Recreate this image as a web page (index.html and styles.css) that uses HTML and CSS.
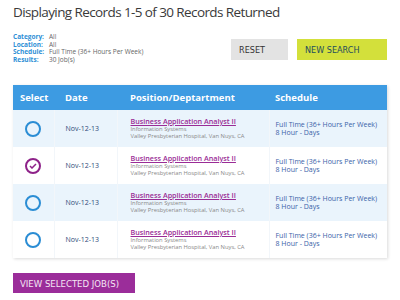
FILE: index.html
```html
<!DOCTYPE html>
<html lang="en">
<head>
  <meta charset="UTF-8">
  <title>Job Search Results</title>
  <link rel="stylesheet" href="styles.css">
</head>
<body>

  <!-- Results heading -->
  <h1 class="title">Displaying Records 1-5 of 30 Records Returned</h1>

  <!-- Search summary + actions -->
  <div class="summary">
    <dl class="filters">
      <dt>Category:</dt><dd>All</dd>
      <dt>Location:</dt><dd>All</dd>
      <dt>Schedule:</dt><dd>Full Time (36+ Hours Per Week)</dd>
      <dt>Results:</dt><dd>30 Job(s)</dd>
    </dl>
    <div class="actions">
      <button class="btn btn-reset">RESET</button>
      <button class="btn btn-new">NEW SEARCH</button>
    </div>
  </div>

  <!-- Results table -->
  <table class="results">
    <thead>
      <tr>
        <th class="col-select">Select</th>
        <th class="col-date">Date</th>
        <th class="col-pos">Position/Deptartment</th>
        <th class="col-sched">Schedule</th>
      </tr>
    </thead>
    <tbody>
      <tr>
        <td class="select"><span class="radio"></span></td>
        <td class="date">Nov-12-13</td>
        <td class="pos">
          <a class="job" href="#">Business Application Analyst II</a>
          <div class="meta">Information Systems</div>
          <div class="meta">Valley Presbyterian Hospital, Van Nuys, CA</div>
        </td>
        <td class="sched">Full Time (36+ Hours Per Week)<br>8 Hour - Days</td>
      </tr>
      <tr>
        <td class="select">
          <span class="radio checked">
            <svg width="8" height="6" viewBox="0 0 8 6"><path d="M1 3 L3 5 L7 1" fill="none" stroke="#8e2289" stroke-width="1.5"/></svg>
          </span>
        </td>
        <td class="date">Nov-12-13</td>
        <td class="pos">
          <a class="job" href="#">Business Application Analyst II</a>
          <div class="meta">Information Systems</div>
          <div class="meta">Valley Presbyterian Hospital, Van Nuys, CA</div>
        </td>
        <td class="sched">Full Time (36+ Hours Per Week)<br>8 Hour - Days</td>
      </tr>
      <tr>
        <td class="select"><span class="radio"></span></td>
        <td class="date">Nov-12-13</td>
        <td class="pos">
          <a class="job" href="#">Business Application Analyst II</a>
          <div class="meta">Information Systems</div>
          <div class="meta">Valley Presbyterian Hospital, Van Nuys, CA</div>
        </td>
        <td class="sched">Full Time (36+ Hours Per Week)<br>8 Hour - Days</td>
      </tr>
      <tr>
        <td class="select"><span class="radio"></span></td>
        <td class="date">Nov-12-13</td>
        <td class="pos">
          <a class="job" href="#">Business Application Analyst II</a>
          <div class="meta">Information Systems</div>
          <div class="meta">Valley Presbyterian Hospital, Van Nuys, CA</div>
        </td>
        <td class="sched">Full Time (36+ Hours Per Week)<br>8 Hour - Days</td>
      </tr>
    </tbody>
  </table>

  <button class="btn btn-view">VIEW SELECTED JOB(S)</button>

</body>
</html>
```

FILE: styles.css
```css
body {
  margin: 0;
  padding: 2px 13px 0;
  background: #fff;
  color: #333;
  font-family: 'Open Sans', 'Noto Sans', sans-serif;
}

.title {
  margin: 0;
  font-size: 13.5px;
  font-weight: normal;
  letter-spacing: -0.6px;
  line-height: 20px;
  color: #3a3a3a;
}

/* Summary row */
.summary {
  display: flex;
  justify-content: space-between;
  align-items: flex-start;
  margin-top: 11px;
}

.filters {
  display: grid;
  grid-template-columns: 36px auto;
  margin: 0;
  font-size: 6.5px;
  line-height: 7.5px;
}

.filters dt {
  color: #2e8fd6;
  font-weight: bold;
}

.filters dd {
  margin: 0;
  color: #666;
}

.actions {
  display: flex;
  gap: 9px;
  margin-top: 6px;
}

.btn {
  border: none;
  height: 21px;
  padding: 0 8px;
  font-family: 'DejaVu Sans Condensed', 'DejaVu Sans', sans-serif;
  font-stretch: condensed;
  font-size: 9px;
  text-align: left;
  cursor: pointer;
}

.btn-reset {
  width: 57px;
  background: #e3e3e3;
  color: #333;
}

.btn-new {
  width: 90px;
  background: #d3e03b;
  color: #1f4d5e;
}

/* Results table */
.results {
  width: 374px;
  margin-top: 22px;
  border-collapse: collapse;
  table-layout: fixed;
  box-shadow: 1px 1px 3px rgba(0, 0, 0, 0.15);
  font-size: 7px;
}

.results th,
.results td {
  box-sizing: border-box;
}

.results th {
  height: 25px;
  padding: 0;
  background: #3d9be2;
  color: #fff;
  font-size: 9.5px;
  text-align: left;
}

.col-select { width: 41px; }
.col-date { width: 63px; }
.col-pos { width: 152px; }
.col-sched { width: 118px; }

.results th.col-select { padding-left: 7px; }
.results th.col-date { padding-left: 11px; }
.results th.col-pos { padding-left: 13px; }
.results th.col-sched { padding-left: 6px; }

.results td {
  height: 37px;
  padding: 0;
  border-left: 1px solid #f2f6fa;
  vertical-align: middle;
}

.results td:first-child {
  border-left: none;
}

.results tbody tr:nth-child(odd) {
  background: #eaf4fc;
}

.select { text-align: center; }
.results td.date { padding-left: 11px; }
.results td.pos { padding-left: 13px; }
.results td.sched { padding-left: 6px; }

.radio {
  display: inline-flex;
  align-items: center;
  justify-content: center;
  width: 12px;
  height: 12px;
  border: 2px solid #2b8dd4;
  border-radius: 50%;
  vertical-align: middle;
}

.radio.checked {
  border-color: #8e2289;
}

.date {
  color: #2e4a78;
}

.job {
  color: #9a2c96;
  font-size: 7.2px;
  font-weight: 600;
  line-height: 9px;
}

.meta {
  color: #888;
  font-size: 5.8px;
  line-height: 7px;
  white-space: nowrap;
}

.sched {
  color: #3a62a8;
  line-height: 8px;
}

.btn-view {
  display: block;
  width: 122px;
  height: 20px;
  margin-top: 15px;
  padding-left: 7px;
  background: #9b2d9a;
  color: #f4e6f4;
  font-size: 9.5px;
}
```
